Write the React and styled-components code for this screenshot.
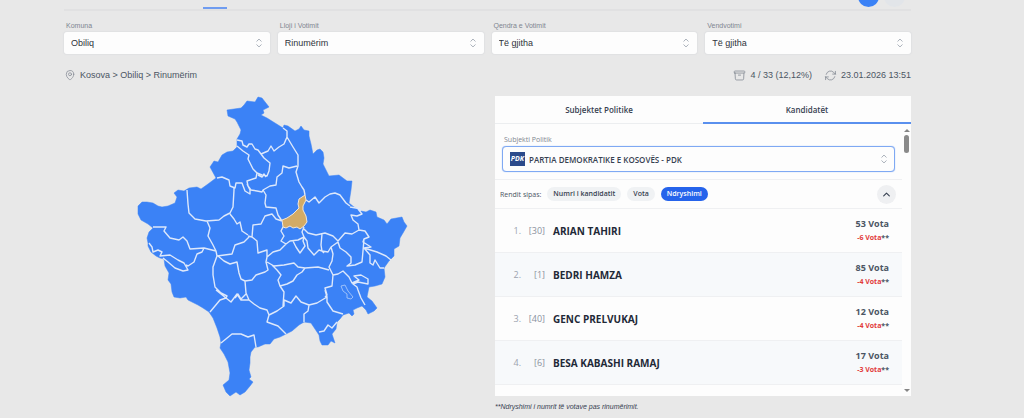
import React, { useState } from 'react'
import styled, { createGlobalStyle } from 'styled-components'
import {
  HiOutlineArchiveBox,
  HiOutlineArrowPath,
  HiOutlineChevronUp,
  HiOutlineChevronUpDown,
  HiOutlineMapPin,
} from 'react-icons/hi2'

const GlobalStyle = createGlobalStyle`
  * {
    box-sizing: border-box;
  }

  body {
    margin: 0;
    color: #4b5563;
    font-family: 'Liberation Sans', Arial, sans-serif;
    font-size: 9px;
    background-color: #e8e8e8;
  }

  button, select {
    font: inherit;
    color: inherit;
  }
`
const Page = styled.div`
  padding: 0 113px 0 64px;
`
const Header = styled.header`
  display: flex;
  justify-content: space-between;
  height: 11px;
  border-bottom: 2px solid #e1e1e2;
  overflow: hidden;
`
const ActiveTab = styled.div`
  align-self: flex-end;
  width: 24px;
  height: 2px;
  margin-left: 139px;
  background-color: #6f9cf0;
`
const Tools = styled.div`
  display: flex;
  align-items: flex-end;
  gap: 5px;
  height: 7px;
  padding-right: 6px;
`
const RoundTool = styled.button`
  flex: none;
  width: 21px;
  height: 21px;
  padding: 0;
  border: none;
  border-radius: 50%;
  background-color: ${(props) => (props.$active ? '#3b82f6' : '#e2e5e9')};
`
const Filters = styled.div`
  display: grid;
  grid-template-columns: repeat(4, 1fr);
  gap: 8px;
  padding-top: 9px;
`
const Field = styled.label`
  display: block;
`
const FieldName = styled.span`
  display: block;
  padding-left: 2px;
  color: #808690;
  font-size: 7px;
  line-height: 12px;
`
const SelectBox = styled.span`
  position: relative;
  display: block;
  color: #9ca3af;

  > svg {
    position: absolute;
    top: 50%;
    right: 4px;
    transform: translateY(-50%);
    pointer-events: none;
  }
`
const Select = styled.select`
  display: block;
  width: 100%;
  height: 22px;
  padding: 0 20px 0 7px;
  color: #2f333a;
  border: none;
  border-radius: 3px;
  background-color: #fdfdfd;
  box-shadow: 0 0 1px 1px #e0e1e3;
  appearance: none;
  outline: none;
`
const PartySelect = styled(Select)`
  height: 26px;
  padding-left: 26px;
  color: #374151;
  font-size: 8px;
  font-weight: 600;
  border: 1px solid #7fa9f3;
  border-radius: 4px;
  box-shadow: 0 0 1px #7fa9f3;
`
const PartyLogo = styled.span`
  position: absolute;
  top: 6px;
  left: 8px;
  width: 15px;
  height: 14px;
  color: #fff;
  font-size: 7px;
  font-style: italic;
  font-weight: 700;
  line-height: 14px;
  text-align: center;
  background-color: #2b4a8b;
`
const InfoBar = styled.div`
  display: flex;
  align-items: center;
  justify-content: space-between;
  height: 42px;
`
const Info = styled.div`
  display: flex;
  align-items: center;
  gap: 4px;

  svg {
    color: #858b95;
  }
`
const InfoGroup = styled.div`
  display: flex;
  gap: 12px;
`
const Main = styled.main`
  display: grid;
  grid-template-columns: 1fr 1fr;
  gap: 15px;
`
const MapArea = styled.div`
  display: flex;
  justify-content: center;

  svg {
    display: block;
    width: 272px;
    height: 304px;
  }
`
const Panel = styled.section`
  display: flex;
  flex-direction: column;
  height: 300px;
  font-family: 'Open Sans', 'Noto Sans', sans-serif;
  font-size: 8px;
  background-color: #fdfdfd;
`
const Tabs = styled.div`
  display: flex;
  border-bottom: 1px solid #eceef0;
`
const Tab = styled.button`
  flex: 1;
  height: 28px;
  padding: 0;
  color: #374151;
  font-weight: 600;
  border: none;
  border-bottom: 2px solid ${(props) => (props.$active ? '#5a90ee' : 'transparent')};
  margin-bottom: -1px;
  background: none;
`
const Scroller = styled.div`
  display: flex;
  flex: 1;
  min-height: 0;
`
const Content = styled.div`
  flex: 1;
  overflow: hidden;
`
const Party = styled.div`
  padding: 10px 7px 7px;
  border-bottom: 1px solid #eff0f2;
`
const SortBar = styled.div`
  display: flex;
  align-items: center;
  gap: 6px;
  height: 29px;
  padding: 0 6px 0 5px;
  font-size: 7px;
  border-bottom: 1px solid #eff0f2;
`
const Pill = styled.button`
  height: 14px;
  padding: 0 6px;
  color: ${(props) => (props.$active ? '#fff' : '#374151')};
  font-weight: 600;
  line-height: 14px;
  border: none;
  border-radius: 7px;
  background-color: ${(props) => (props.$active ? '#2563eb' : '#f0f2f4')};
`
const Collapse = styled.button`
  display: flex;
  align-items: center;
  justify-content: center;
  width: 19px;
  height: 19px;
  margin-left: auto;
  padding: 0;
  color: #374151;
  border: none;
  border-radius: 50%;
  background-color: #eff0f2;
`
const List = styled.ol`
  margin: 0;
  padding: 0;
  list-style: none;
`
const Candidate = styled.li`
  display: flex;
  align-items: center;
  height: 44px;
  padding: 0 13px 0 14px;
  color: #9ca3af;
  font-size: 9px;
  border-bottom: 1px solid #eff0f2;

  &:nth-child(even) {
    background-color: #f7f9fb;
  }
`
const Position = styled.span`
  width: 12px;
  text-align: right;
`
const Code = styled.span`
  width: 24px;
  color: #8b929d;
  text-align: right;
`
const Name = styled.span`
  margin-left: 8px;
  color: #1f2937;
  font-size: 10px;
  font-weight: 700;
`
const Votes = styled.div`
  margin-left: auto;
  color: #4b5563;
  font-weight: 700;
  line-height: 14px;
  text-align: right;
`
const Change = styled.div`
  font-size: 7px;

  span {
    color: #e23b3b;
  }
`
const ScrollTrack = styled.div`
  display: flex;
  flex-direction: column;
  align-items: center;
  width: 9px;
  padding: 5px 0 4px;
`
const ScrollArrow = styled.span`
  border: 3px solid transparent;
  border-top-width: ${(props) => (props.$down ? '3px' : '0')};
  border-bottom-width: ${(props) => (props.$down ? '0' : '3px')};
  border-top-color: #858585;
  border-bottom-color: #858585;
`
const ScrollThumb = styled.span`
  width: 5px;
  height: 18px;
  margin: 3px 0 auto;
  border-radius: 3px;
  background-color: #8a8a8a;
`
const Note = styled.p`
  margin: 6px 0 0;
  color: #374151;
  font-size: 7px;
  font-style: italic;
  line-height: 10px;
`

const filters = [
  { label: 'Komuna', value: 'Obiliq' },
  { label: 'Lloji i Votimit', value: 'Rinumërim' },
  { label: 'Qendra e Votimit', value: 'Të gjitha' },
  { label: 'Vendvotimi', value: 'Të gjitha' },
]
const candidates = [
  { code: 30, name: 'ARIAN TAHIRI', votes: 53, change: -6 },
  { code: 1, name: 'BEDRI HAMZA', votes: 85, change: -4 },
  { code: 40, name: 'GENC PRELVUKAJ', votes: 12, change: -4 },
  { code: 6, name: 'BESA KABASHI RAMAJ', votes: 17, change: -3 },
]
const sorts = ['Numri i kandidatit', 'Vota', 'Ndryshimi']

const country =
  'M227 110 241 108 244 105 247 101 255 102 258 97 262 98 269 107 263 110 264 113 261 115 267 118 275 123 283 128 284 125 288 126 295 131 299 129 301 126 304 130 309 131 309 136 311 144 313 154 317 150 320 149 323 152 324 158 323 164 329 176 339 175 347 181 352 181 351 190 349 203 354 207 361 211 366 212 370 210 376 212 377 217 384 220 387 224 391 219 402 217 404 222 407 226 403 233 400 238 399 246 394 249 394 256 389 261 384 268 385 277 382 284 375 286 369 287 367 297 372 301 377 308 374 311 368 314 366 310 362 306 357 308 353 310 354 314 352 316 349 313 343 315 340 319 337 322 336 329 332 334 334 340 335 343 331 341 328 345 322 345 320 341 319 335 315 329 311 323 304 322 299 325 292 331 286 334 280 337 274 339 270 344 265 344 258 347 255 347 251 352 250 357 250 363 249 370 251 377 249 379 253 382 250 386 245 392 240 395 236 392 230 396 226 392 223 385 229 380 230 373 228 362 224 354 220 348 221 343 220 337 217 328 213 318 209 312 203 308 198 305 188 300 186 297 180 298 174 297 172 292 171 284 168 280 169 273 165 266 164 259 160 258 156 256 151 252 148 246 148 243 147 238 149 232 153 228 148 224 141 220 138 214 138 206 142 202 147 202 153 203 158 206 162 207 168 206 175 203 177 197 174 193 178 190 184 191 189 188 197 187 201 189 208 184 216 178 210 167 214 161 218 162 222 155 227 152 233 151 237 147 237 139 240 134 241 130 237 122 235 119 228 116Z'
const obiliq =
  'M305 195 299 199 298 204 299 208 293 214 287 218 282 220 283 227 286 228 290 226 293 228 297 227 300 229 304 226 307 222 306 216 303 210 303 206 306 200Z'
const borders = [
  'M237 140 242 141 243 145 247 147 249 144 252 144 255 149 258 150 261 154 268 151 271 146 274 151 279 147 284 144 287 137 287 131 283 128',
  'M287 137 293 147 298 155 298 166 296 172 299 182 302 187 304 190 305 195',
  'M237 146 243 151 249 155 248 159 251 165 253 169 257 173 256 178 247 181 248 186 251 190 257 191 262 192 263 190 270 186 276 185 277 177 282 173 283 166 289 168 297 166',
  'M261 154 264 158 270 163 269 171 267 176 262 175 257 173M258 175 262 177 264 174 266 177',
  'M217 178 222 177 229 180 230 186 235 188 236 183 242 183 245 191 250 194 250 190 247 184',
  'M263 190 266 195 265 203 266 207 276 208 278 215 282 221',
  'M306 200 309 202 315 197 319 203 325 197 330 194 335 193 340 195 346 203 350 206',
  'M361 211 358 209 362 214 357 216 351 215 353 220 358 224 359 230 365 231 369 237 364 239 363 242 371 247 364 248 377 252 386 256 391 260',
  'M350 207 356 208 361 209',
  'M359 230 352 234 345 233 338 241 333 236 325 233 316 235 308 233 304 229',
  'M322 234 321 245 322 251 328 252 331 247 338 242',
  'M331 247 333 254 332 261 329 267 333 275 332 286 325 288 327 295 325 297',
  'M338 242 340 248 346 252 351 257 351 263 347 266 355 265 362 262 363 251 364 239',
  'M364 248 370 255 370 263 373 265 375 260 380 268 384 268',
  'M283 227 281 231 284 236 281 241 286 244 290 241 298 240 304 237 302 232 304 227',
  'M304 237 307 241 308 248 314 255 319 250 322 251 324 253',
  'M293 241 296 247 300 253 305 246 303 241 304 237',
  'M282 221 276 219 272 214 265 216 261 224 253 225 252 237',
  'M286 244 280 250 273 252 267 257 267 250 258 253 257 241 252 237 248 236',
  'M187 190 188 204 189 213 195 219 206 221 219 220 224 216 230 213 233 207 234 190 234 187',
  'M230 214 234 219 237 224 240 222 242 231 248 235',
  'M207 221 210 228 208 236 213 245 216 251 217 256 232 254 235 245 244 242 249 237',
  'M216 251 204 248 190 249 187 241 183 237 179 240 170 238 164 231 166 227 153 227',
  'M204 248 202 252 197 254 194 262 188 266 186 265',
  'M149 243 152 247 153 252 158 250 162 252 160 256 170 255 178 260 184 263 188 270 183 271 175 268 168 262 163 258',
  'M217 256 213 267 213 275 215 287 221 293 227 296 226 298',
  'M218 256 224 261 230 264 237 262 239 273 241 279 245 281 252 280 256 275 265 272 268 270 266 262 267 257',
  'M245 281 246 293 249 300M235 298 238 294 241 299 243 297 246 294',
  'M267 262 274 266 284 265 294 263 298 267 305 268 318 267 329 270',
  'M305 268 302 272 297 275 293 281 287 284 280 286 284 292 283 306',
  'M272 265 277 270 281 275 278 280 280 286',
  'M216 290 226 298 220 300 210 312',
  'M226 298 231 302 237 294 241 300 249 300 254 304 260 308 267 310 269 315 277 311 284 306 284 300 291 303 296 296 301 302 309 305 317 303 327 297 325 290',
  'M269 315 267 322 278 326 286 334',
  'M309 305 308 311 304 314 304 322',
  'M327 297 327 302 333 311 343 314',
  'M319 332 324 331 328 325 332 328 337 322',
  'M221 343 232 334 241 334 248 337 254 335 256 347',
  'M333 275 338 274 343 271 349 277 352 283 359 280 354 276 361 275 368 279 368 284 358 282 353 284 357 287 358 290 361 298 365 305',
]
const enclave = 'M341 286 345 285 348 291 353 297 351 299 347 298 347 294 343 291Z'

function KosovoMap() {
  return (
    <svg viewBox='136 96 272 304' role='img' aria-label='Kosova'>
      <path d={country} fill='#3b82f6' stroke='#3b82f6' strokeWidth='0.5' />
      <path
        d={borders.join('')}
        fill='none'
        stroke='#dde8fb'
        strokeWidth='1.4'
        strokeLinejoin='round'
      />
      <path d={enclave} fill='none' stroke='#b4cffa' strokeWidth='0.8' />
      <path d={obiliq} fill='#d3ab66' stroke='#f0e6d8' strokeWidth='1' />
    </svg>
  )
}

export default function App() {
  const [tab, setTab] = useState('Kandidatët')
  const [sort, setSort] = useState('Ndryshimi')

  return (
    <Page>
      <GlobalStyle />
      <Header>
        <ActiveTab />
        <Tools>
          <RoundTool $active aria-label='Harta' />
          <RoundTool aria-label='Tabela' />
        </Tools>
      </Header>
      <Filters>
        {filters.map((filter) => (
          <Field key={filter.label}>
            <FieldName>{filter.label}</FieldName>
            <SelectBox>
              <Select>
                <option>{filter.value}</option>
              </Select>
              <HiOutlineChevronUpDown size={14} />
            </SelectBox>
          </Field>
        ))}
      </Filters>
      <InfoBar>
        <Info>
          <HiOutlineMapPin size={12} />
          Kosova &gt; Obiliq &gt; Rinumërim
        </Info>
        <InfoGroup>
          <Info>
            <HiOutlineArchiveBox size={13} />4 / 33 (12,12%)
          </Info>
          <Info>
            <HiOutlineArrowPath size={13} />
            23.01.2026 13:51
          </Info>
        </InfoGroup>
      </InfoBar>
      <Main>
        <MapArea>
          <KosovoMap />
        </MapArea>
        <div>
          <Panel>
            <Tabs>
              {['Subjektet Politike', 'Kandidatët'].map((name) => (
                <Tab
                  key={name}
                  $active={name === tab}
                  onClick={() => setTab(name)}
                >
                  {name}
                </Tab>
              ))}
            </Tabs>
            <Scroller>
              <Content>
                <Party>
                  <Field>
                    <FieldName>Subjekti Politik</FieldName>
                    <SelectBox>
                      <PartySelect>
                        <option>PARTIA DEMOKRATIKE E KOSOVËS - PDK</option>
                      </PartySelect>
                      <PartyLogo aria-hidden='true'>PDK</PartyLogo>
                      <HiOutlineChevronUpDown size={14} />
                    </SelectBox>
                  </Field>
                </Party>
                <SortBar>
                  Rendit sipas:
                  {sorts.map((name) => (
                    <Pill
                      key={name}
                      $active={name === sort}
                      onClick={() => setSort(name)}
                    >
                      {name}
                    </Pill>
                  ))}
                  <Collapse aria-label='Mbyll'>
                    <HiOutlineChevronUp size={9} strokeWidth={3} />
                  </Collapse>
                </SortBar>
                <List>
                  {candidates.map((candidate, index) => (
                    <Candidate key={candidate.code}>
                      <Position>{index + 1}.</Position>
                      <Code>[{candidate.code}]</Code>
                      <Name>{candidate.name}</Name>
                      <Votes>
                        {candidate.votes} Vota
                        <Change>
                          <span>{candidate.change} Vota</span>**
                        </Change>
                      </Votes>
                    </Candidate>
                  ))}
                </List>
              </Content>
              <ScrollTrack>
                <ScrollArrow />
                <ScrollThumb />
                <ScrollArrow $down />
              </ScrollTrack>
            </Scroller>
          </Panel>
          <Note>**Ndryshimi i numrit të votave pas rinumërimit.</Note>
        </div>
      </Main>
    </Page>
  )
}
